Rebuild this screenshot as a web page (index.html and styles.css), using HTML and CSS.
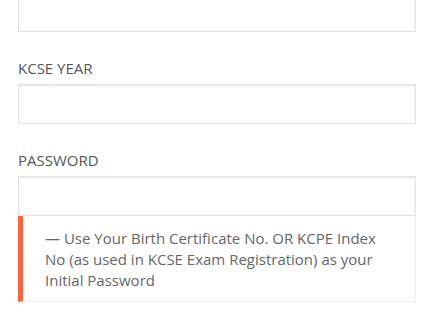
FILE: index.html
```html
<!DOCTYPE html>
<html>
<head>
<meta charset="utf-8">
<link rel="stylesheet" href="styles.css">
</head>
<body>
<form class="form">
  <div class="group first">
    <input class="field" type="text">
  </div>
  <div class="group">
    <label class="label">KCSE YEAR</label>
    <input class="field" type="text">
  </div>
  <div class="group">
    <label class="label">PASSWORD</label>
    <input class="field" type="password">
    <div class="note">— Use Your Birth Certificate No. OR KCPE Index No (as used in KCSE Exam Registration) as your Initial Password</div>
  </div>
</form>
</body>
</html>
```
FILE: styles.css
```css
html, body {
  margin: 0;
  padding: 0;
  background: #fff;
}
body {
  font-family: "Open Sans", "Noto Sans", sans-serif;
  color: #555;
  overflow: hidden;
}
.form {
  padding: 0 18px;
  margin-top: -8px;
}
.group {
  display: flex;
  flex-direction: column;
  margin-bottom: 26px;
}
.label {
  font-size: 15px;
  line-height: 21px;
  color: #555;
  margin-bottom: 5px;
}
.field {
  box-sizing: border-box;
  height: 40px;
  width: 100%;
  margin: 0;
  border: 1px solid #e3e3e3;
  border-radius: 0;
  box-shadow: inset 0 1px 2px rgba(0,0,0,0.1);
  background: #fff;
  outline: none;
}
.note {
  border: 1px solid #eeeeee;
  border-top: none;
  border-left: 5px solid #f5653f;
  padding: 12px 28px 10px 22px;
  font-size: 15px;
  line-height: 21px;
  color: #666;
}
```
